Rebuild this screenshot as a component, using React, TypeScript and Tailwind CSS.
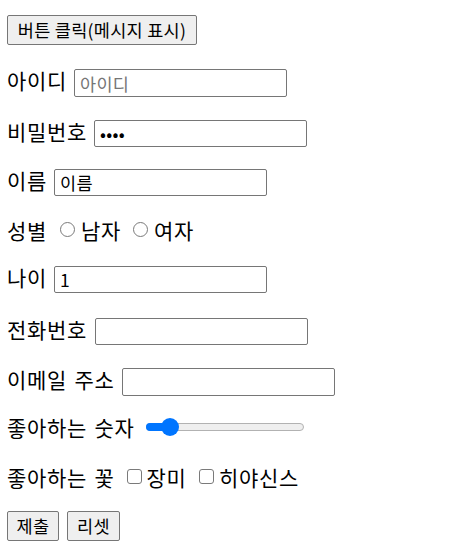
import React from "react";

const inputCls =
  "h-[27px] w-[213px] rounded-[2px] border border-[#767676] bg-white pl-[5px] text-[17.5px] tracking-[0.3px] text-black outline-none placeholder:text-[#757575]";

const btnCls =
  "h-[30px] rounded-[2px] border border-[#767676] bg-[#efefef] text-[17.5px] tracking-[0.3px] text-black";

function Radio() {
  return <span className="block h-[15px] w-[15px] shrink-0 rounded-full border-[1.5px] border-[#7a7a7a] bg-white" />;
}

function Check() {
  return <span className="block h-[15px] w-[15px] shrink-0 rounded-[3px] border-[1.5px] border-[#7a7a7a] bg-white" />;
}

function Label({ children, gap = "mr-[7px]" }: { children: React.ReactNode; gap?: string }) {
  return <span className={`-translate-y-[3px] whitespace-pre leading-[22px] ${gap}`}>{children}</span>;
}

export default function App() {
  const [num] = React.useState(10);

  return (
    <div className="flex min-h-[558px] w-[476px] flex-col bg-white px-[7px] font-['Noto_Sans_CJK_KR',sans-serif] text-[21px] tracking-[0.68px] text-black [word-spacing:2px]">
      <div className="mt-[15px] flex">
        <button className={btnCls + " w-[190px]"}>버튼 클릭(메시지 표시)</button>
      </div>

      <div className="mt-[24px] flex h-[28px] items-center">
        <Label>아이디</Label>
        <input className={inputCls + " h-[28px]"} placeholder="아이디" />
      </div>

      <div className="mt-[23px] flex h-[27px] items-center">
        <Label>비밀번호</Label>
        <input className={inputCls} type="password" defaultValue="1234" />
      </div>

      <div className="mt-[22px] flex h-[27px] items-center">
        <Label>이름</Label>
        <input className={inputCls} defaultValue="이름" />
      </div>

      <div className="mt-[20px] flex h-[27px] items-center">
        <span className="leading-[22px]">성별</span>
        <span className="ml-[13px]">
          <Radio />
        </span>
        <span className="ml-[6px] leading-[22px]">남자</span>
        <span className="ml-[12px]">
          <Radio />
        </span>
        <span className="ml-[6px] leading-[22px]">여자</span>
      </div>

      <div className="mt-[23px] flex h-[27px] items-center">
        <Label>나이</Label>
        <input className={inputCls} defaultValue="1" />
      </div>

      <div className="mt-[25px] flex h-[27px] items-center">
        <Label gap="mr-[8px]">전화번호</Label>
        <input className={inputCls + " w-[212px]"} />
      </div>

      <div className="mt-[23px] flex h-[28px] items-center">
        <Label gap="mr-[8px]">이메일 주소</Label>
        <input className={inputCls + " h-[28px] w-[211px]"} />
      </div>

      <div className="mt-[17px] flex h-[27px] items-center">
        <span className="leading-[22px]">좋아하는 숫자</span>
        <div className="relative ml-[12px] h-[20px] w-[158px]">
          <div className="absolute left-0 right-0 top-[6px] h-[8px] rounded-full border border-[#b2b2b2] bg-[#efefef]" />
          <div
            className="absolute left-0 top-[6px] h-[8px] rounded-l-full bg-[#0075ff]"
            style={{ width: `${13 + num}px` }}
          />
          <div className="absolute left-[14.5px] top-[1px] h-[18px] w-[18px] rounded-full bg-[#0075ff]" />
        </div>
      </div>

      <div className="mt-[23px] flex h-[27px] items-center">
        <span className="leading-[22px]">좋아하는 꽃</span>
        <span className="ml-[12.5px]">
          <Check />
        </span>
        <span className="ml-[4.5px] leading-[22px]">장미</span>
        <span className="ml-[12.5px]">
          <Check />
        </span>
        <span className="ml-[5px] leading-[22px]">히야신스</span>
      </div>

      <div className="mt-[21px] flex gap-[8px]">
        <button className={btnCls + " h-[29px] w-[52px]"}>제출</button>
        <button className={btnCls + " h-[29px] w-[53px]"}>리셋</button>
      </div>
    </div>
  );
}
